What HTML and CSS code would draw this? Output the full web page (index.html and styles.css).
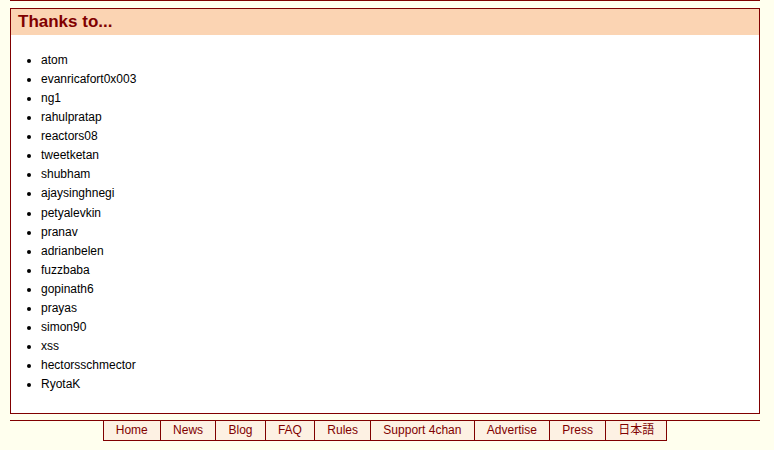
FILE: index.html
```html
<!DOCTYPE html>
<html lang="en">
<head>
    <meta charset="UTF-8">
    <title>Thanks to...</title>
    <link rel="stylesheet" href="styles.css">
</head>
<body>
    <div class="prev-box"></div>

    <div class="box">
        <div class="boxbar">
            <h2>Thanks to...</h2>
        </div>
        <div class="boxcontent">
            <ul>
                <li>atom</li>
                <li>evanricafort0x003</li>
                <li>ng1</li>
                <li>rahulpratap</li>
                <li>reactors08</li>
                <li>tweetketan</li>
                <li>shubham</li>
                <li>ajaysinghnegi</li>
                <li>petyalevkin</li>
                <li>pranav</li>
                <li>adrianbelen</li>
                <li>fuzzbaba</li>
                <li>gopinath6</li>
                <li>prayas</li>
                <li>simon90</li>
                <li>xss</li>
                <li>hectorsschmector</li>
                <li>RyotaK</li>
            </ul>
        </div>
    </div>

    <div class="footer">
        <ul class="footer-nav">
            <li><a href="#">Home</a></li>
            <li><a href="#">News</a></li>
            <li><a href="#">Blog</a></li>
            <li><a href="#">FAQ</a></li>
            <li><a href="#">Rules</a></li>
            <li><a href="#">Support 4chan</a></li>
            <li><a href="#">Advertise</a></li>
            <li><a href="#">Press</a></li>
            <li><a href="#">日本語</a></li>
        </ul>
    </div>
</body>
</html>
```

FILE: styles.css
```css
body {
    margin: 0 14px 0 10px;
    background-color: #ffffee;
    font-family: 'Liberation Sans', Arial, 'Noto Sans CJK JP', sans-serif;
    font-size: 12px;
    color: #000;
}
.prev-box {
    border-bottom: 1px solid #800000;
    margin-bottom: 7px;
}
.box {
    border: 1px solid #800000;
    background-color: #fff;
}
.boxbar {
    background-color: #fbd4b3;
    height: 26px;
}
.boxbar h2 {
    margin: 0;
    padding-left: 7px;
    font-size: 17px;
    line-height: 26px;
    font-weight: bold;
    color: #800000;
}
.boxcontent ul {
    margin: 16px 0 19px;
    padding-left: 30px;
}
.boxcontent li {
    line-height: 19.06px;
}
.footer {
    margin-top: 6px;
    border-top: 1px solid #800000;
    text-align: center;
}
.footer-nav {
    display: inline-flex;
    margin: 0;
    padding: 0;
    list-style: none;
    border-right: 1px solid #800000;
}
.footer-nav li {
    border-left: 1px solid #800000;
    border-bottom: 1px solid #800000;
    background-color: #fdf1e3;
    padding: 0 12.2px;
    line-height: 19px;
}
.footer-nav a {
    color: #800000;
    text-decoration: none;
}
```
